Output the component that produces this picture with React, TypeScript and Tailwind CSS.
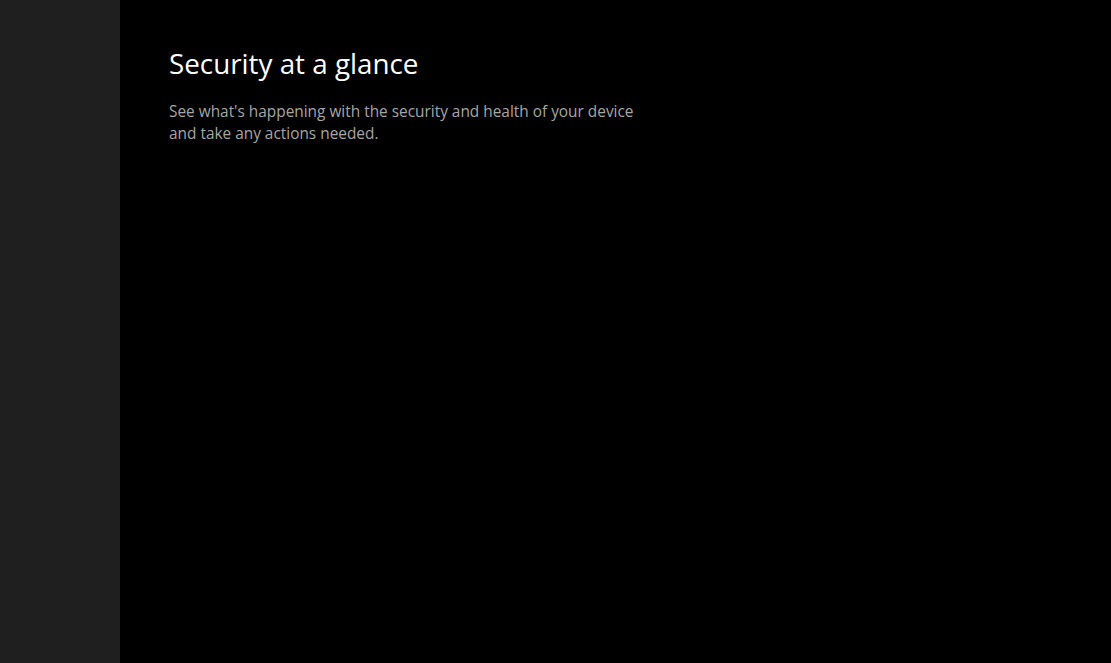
export default function App() {
  return (
    <div className="flex h-[663px] w-[1111px] overflow-hidden bg-black" style={{ fontFamily: '"Open Sans", "Noto Sans", sans-serif' }}>
      <aside className="h-full w-[120px] shrink-0 bg-[#1f1f1f]" />
      <main className="flex-1 pl-[49px] pt-[43px]">
        <h1 className="text-[27.8px] leading-[40px] font-normal text-white">Security at a glance</h1>
        <p className="mt-[18px] max-w-[475px] text-[15.4px] leading-[22px] text-[#a6a6a6]">
          See what's happening with the security and health of your device and take any actions needed.
        </p>
      </main>
    </div>
  );
}
